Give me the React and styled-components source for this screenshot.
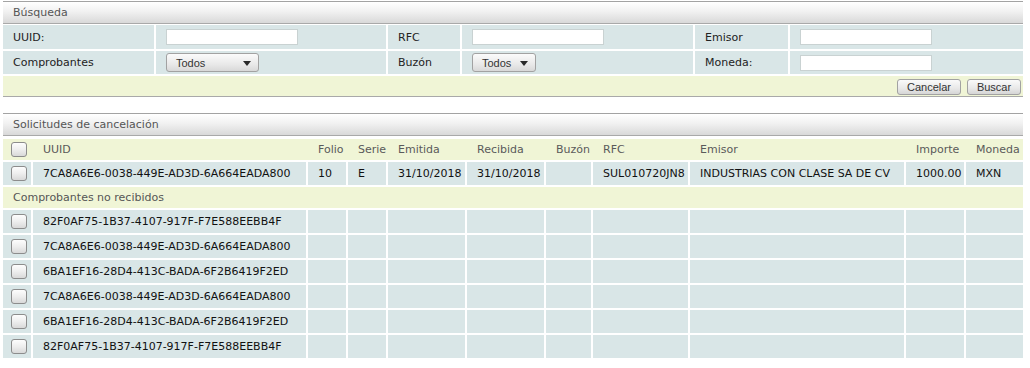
import styled, { createGlobalStyle } from "styled-components"

const GlobalStyle = createGlobalStyle`
	html, body {
		margin: 0;
		background: #fff;
	}
	body {
		font-family: "DejaVu Sans", Verdana, sans-serif;
		font-size: 11px;
		color: #222;
	}
`

const BLUE = "#d9e6e7"
const YELLOW = "#f0f5d6"
const RESULT_COLS = "28px 273px 38px 38px 77px 77px 45px 95px 214px 58px 57px"

const requests = [
	{
		uuid: "7CA8A6E6-0038-449E-AD3D-6A664EADA800",
		folio: "10",
		serie: "E",
		emitida: "31/10/2018",
		recibida: "31/10/2018",
		buzon: "",
		rfc: "SUL010720JN8",
		emisor: "INDUSTRIAS CON CLASE SA DE CV",
		importe: "1000.00",
		moneda: "MXN",
	},
]

const notReceived = [
	"82F0AF75-1B37-4107-917F-F7E588EEBB4F",
	"7CA8A6E6-0038-449E-AD3D-6A664EADA800",
	"6BA1EF16-28D4-413C-BADA-6F2B6419F2ED",
	"7CA8A6E6-0038-449E-AD3D-6A664EADA800",
	"6BA1EF16-28D4-413C-BADA-6F2B6419F2ED",
	"82F0AF75-1B37-4107-917F-F7E588EEBB4F",
]

const Select = ({ width }) => (
	<Dropdown $w={width}>
		Todos
		<Arrow />
	</Dropdown>
)

const App = () => {
	return (
		<Page>
			<GlobalStyle />
			<Panel $bordered>
				<PanelHeader>Búsqueda</PanelHeader>
				<SearchGrid>
					<Label>UUID:</Label>
					<Field><TextInput /></Field>
					<Label>RFC</Label>
					<Field><TextInput /></Field>
					<Label>Emisor</Label>
					<Field><TextInput /></Field>

					<Label $h="23px">Comprobantes</Label>
					<Field $h="23px"><Select width="93px" /></Field>
					<Label $h="23px">Buzón</Label>
					<Field $h="23px"><Select width="64px" /></Field>
					<Label $h="23px">Moneda:</Label>
					<Field $h="23px"><TextInput /></Field>
				</SearchGrid>
				<Actions>
					<Button $w="64px">Cancelar</Button>
					<Button $w="54px">Buscar</Button>
				</Actions>
			</Panel>

			<Panel $top="16px">
				<PanelHeader>Solicitudes de cancelación</PanelHeader>
				<Rows>
					<HeadRow>
						<HeadCell><Check /></HeadCell>
						<HeadCell>UUID</HeadCell>
						<HeadCell>Folio</HeadCell>
						<HeadCell>Serie</HeadCell>
						<HeadCell>Emitida</HeadCell>
						<HeadCell>Recibida</HeadCell>
						<HeadCell>Buzón</HeadCell>
						<HeadCell>RFC</HeadCell>
						<HeadCell>Emisor</HeadCell>
						<HeadCell>Importe</HeadCell>
						<HeadCell>Moneda</HeadCell>
					</HeadRow>
					{requests.map((r, i) => (
						<DataRow key={i}>
							<Cell><Check /></Cell>
							<Cell>{r.uuid}</Cell>
							<Cell>{r.folio}</Cell>
							<Cell>{r.serie}</Cell>
							<Cell>{r.emitida}</Cell>
							<Cell>{r.recibida}</Cell>
							<Cell>{r.buzon}</Cell>
							<Cell>{r.rfc}</Cell>
							<Cell>{r.emisor}</Cell>
							<Cell>{r.importe}</Cell>
							<Cell>{r.moneda}</Cell>
						</DataRow>
					))}
					<GroupRow>Comprobantes no recibidos</GroupRow>
					{notReceived.map((uuid, i) => (
						<DataRow key={i}>
							<Cell><Check /></Cell>
							<Cell>{uuid}</Cell>
							<Cell />
							<Cell />
							<Cell />
							<Cell />
							<Cell />
							<Cell />
							<Cell />
							<Cell />
							<Cell />
						</DataRow>
					))}
				</Rows>
			</Panel>
		</Page>
	)
}

const Page = styled.div`
	width: 1020px;
	padding: 1px 7px 0 3px;
`

const Panel = styled.div`
	display: flex;
	flex-direction: column;
	margin-top: ${p => p.$top || 0};
	border-bottom: ${p => (p.$bordered ? "1px solid #a9a9a9" : "none")};
`

const PanelHeader = styled.div`
	box-sizing: border-box;
	height: 23px;
	display: flex;
	align-items: center;
	padding-left: 10px;
	color: #555;
	background: linear-gradient(#ffffff, #f1f1f1 45%, #d9d9d9);
	border-top: 1px solid #a3a3a3;
	border-bottom: 1px solid #a9a9a9;
`

const SearchGrid = styled.div`
	display: grid;
	grid-template-columns: 151px 230px 72px 231px 93px 233px;
	column-gap: 2px;
	row-gap: 2px;
	margin-top: 1px;
`

const Label = styled.div`
	height: ${p => p.$h || "24px"};
	display: flex;
	align-items: center;
	padding-left: 10px;
	background: ${BLUE};
	color: #222;
`

const Field = styled.div`
	height: ${p => p.$h || "24px"};
	display: flex;
	align-items: center;
	padding-left: 10px;
	background: ${BLUE};
`

const TextInput = styled.input`
	box-sizing: border-box;
	width: 132px;
	height: 16px;
	margin: 0;
	padding: 0 3px;
	background: #fff;
	border: 1px solid #c9d2d2;
	outline: none;
	font: 11px "DejaVu Sans", sans-serif;
`

const Dropdown = styled.div`
	box-sizing: border-box;
	width: ${p => p.$w};
	height: 19px;
	display: flex;
	align-items: center;
	justify-content: space-between;
	padding: 0 7px 0 9px;
	border: 1px solid #a2a2a2;
	border-radius: 3px;
	background: linear-gradient(#fbfbfb, #e9e9e9 60%, #d8d8d8);
	font: 11px "Liberation Sans", Arial, sans-serif;
	color: #333;
`

const Arrow = styled.span`
	width: 0;
	height: 0;
	border-left: 4.5px solid transparent;
	border-right: 4.5px solid transparent;
	border-top: 5px solid #2a2a2a;
	margin-top: 1px;
`

const Actions = styled.div`
	height: 20px;
	margin-top: 2px;
	display: flex;
	justify-content: flex-end;
	align-items: flex-start;
	gap: 6px;
	padding: 3px 2px 0 0;
	box-sizing: border-box;
	background: ${YELLOW};
`

const Button = styled.div`
	box-sizing: border-box;
	width: ${p => p.$w};
	height: 16px;
	display: flex;
	align-items: center;
	justify-content: center;
	border: 1px solid #a2a2a2;
	border-radius: 3px;
	background: linear-gradient(#fafafa, #e8e8e8 60%, #d6d6d6);
	font: 11px "Liberation Sans", Arial, sans-serif;
	color: #333;
	cursor: pointer;
`

const Rows = styled.div`
	display: flex;
	flex-direction: column;
	gap: 2px;
	margin-top: 3px;
`

const HeadRow = styled.div`
	display: grid;
	grid-template-columns: ${RESULT_COLS};
	column-gap: 2px;
	height: 21px;
	background: ${YELLOW};
`

const HeadCell = styled.div`
	display: flex;
	align-items: center;
	padding-left: 10px;
	color: #5a5a5a;
	white-space: nowrap;
	&:first-child {
		padding-left: 8px;
	}
`

const DataRow = styled.div`
	display: grid;
	grid-template-columns: ${RESULT_COLS};
	column-gap: 2px;
	height: 23px;
`

const Cell = styled.div`
	display: flex;
	align-items: center;
	padding-left: 10px;
	background: ${BLUE};
	color: #111;
	white-space: nowrap;
	overflow: hidden;
	&:first-child {
		padding-left: 8px;
	}
`

const GroupRow = styled.div`
	height: 21px;
	display: flex;
	align-items: center;
	padding-left: 10px;
	background: ${YELLOW};
	color: #555;
`

const Check = styled.span`
	box-sizing: border-box;
	display: inline-block;
	width: 16px;
	height: 15px;
	border: 1px solid #8c8c8c;
	border-radius: 3px;
	background: linear-gradient(#fdfdfd, #eeeeee 50%, #d9d9d9);
`

export default App
